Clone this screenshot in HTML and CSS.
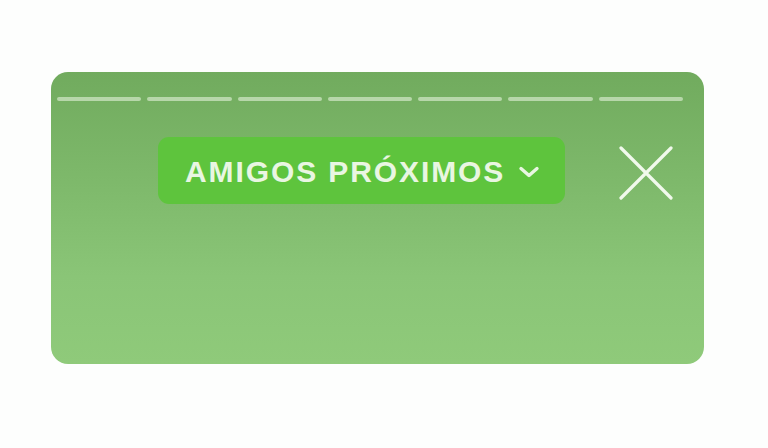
FILE: index.html
```html
<!DOCTYPE html>
<html lang="pt">
<head>
<meta charset="utf-8">
<title>Amigos próximos</title>
<link rel="stylesheet" href="styles.css">
</head>
<body>
<div class="card">
  <div class="progress">
    <span class="seg"></span><span class="seg"></span><span class="seg"></span><span class="seg"></span><span class="seg"></span><span class="seg"></span><span class="seg"></span>
  </div>
  <div class="header">
    <div class="pill">
      <span class="label">AMIGOS PRÓXIMOS</span>
      <svg class="chev" width="22" height="14" viewBox="0 0 22 14"><path d="M3 3.5 L11 10.5 L19 3.5" fill="none" stroke="#e9f6e2" stroke-width="3.4" stroke-linecap="round" stroke-linejoin="round"/></svg>
    </div>
    <svg class="close" width="54" height="54" viewBox="0 0 54 54"><path d="M2 2 L52 52 M52 2 L2 52" fill="none" stroke="#f1f9ec" stroke-width="3.2" stroke-linecap="round"/></svg>
  </div>
</div>
</body>
</html>
```
FILE: styles.css
```css
html, body {
  margin: 0;
  padding: 0;
  background: #fdfefd;
}
body {
  padding: 72px 0 0 51px;
  width: 768px;
  height: 448px;
  box-sizing: border-box;
  overflow: hidden;
}
.card {
  width: 653px;
  height: 292px;
  border-radius: 17px;
  background: linear-gradient(180deg, #71ab5e 0%, #7db86a 35%, #8ac577 70%, #8fca7a 100%);
  box-sizing: border-box;
  padding: 25px 21px 0 6px;
}
.progress {
  display: flex;
  gap: 6px;
}
.seg {
  flex: 1;
  height: 4px;
  border-radius: 2px;
  background: rgba(225, 240, 215, 0.62);
}
.header {
  display: flex;
  align-items: flex-start;
  margin-top: 36px;
  padding-left: 101px;
}
.pill {
  width: 407px;
  height: 67px;
  box-sizing: border-box;
  border-radius: 11px;
  background: #5ec43d;
  display: flex;
  align-items: center;
  padding-left: 27px;
}
.label {
  font-family: "Liberation Sans", Arial, sans-serif;
  font-weight: bold;
  font-size: 30px;
  letter-spacing: 1.9px;
  color: #e9f6e2;
  line-height: 1;
  margin-top: 2px;
}
.chev {
  margin-left: 13px;
  margin-top: 2px;
}
.close {
  margin-left: 54px;
  margin-top: 9px;
}
```
